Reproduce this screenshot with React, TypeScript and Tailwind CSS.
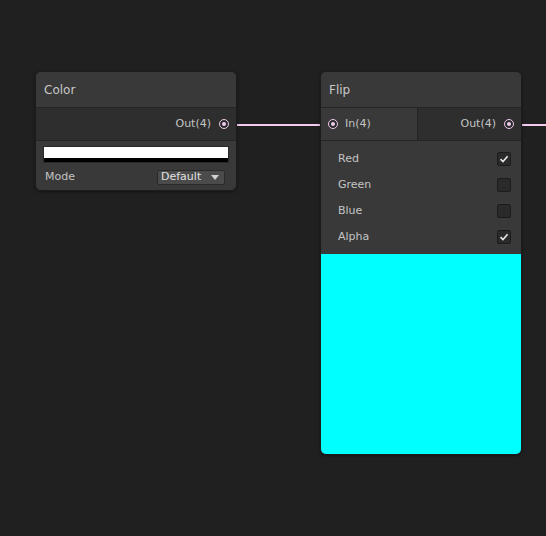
import React from 'react';

const font = { fontFamily: '"DejaVu Sans", Verdana, sans-serif' };

function Port() {
  return (
    <span className="flex h-[10px] w-[10px] items-center justify-center rounded-full border-[1.5px] border-[#f2cbef] bg-[#2a2a2a]">
      <span className="h-[4px] w-[4px] rounded-full bg-[#f2cbef]" />
    </span>
  );
}

function CheckBox({ checked }: { checked: boolean }) {
  return (
    <span className="flex h-[14px] w-[14px] items-center justify-center rounded-[2px] border border-[#1c1c1c] bg-[#2a2a2a]">
      {checked && (
        <svg width="10" height="10" viewBox="0 0 10 10">
          <path d="M1.5 5.2 L4 7.6 L8.6 2.2" fill="none" stroke="#e6e6e6" strokeWidth="1.6" />
        </svg>
      )}
    </span>
  );
}

function Title({ children }: { children: React.ReactNode }) {
  return (
    <div className="flex h-[36px] items-center border-b border-[#242424] bg-[#393939] px-[8px] text-[12px] text-[#c8c8c8]">
      {children}
    </div>
  );
}

const toggles = [
  { label: 'Red', on: true },
  { label: 'Green', on: false },
  { label: 'Blue', on: false },
  { label: 'Alpha', on: true },
];

export default function App() {
  return (
    <div className="relative h-[536px] w-[546px] overflow-hidden bg-[#202020]" style={font}>
      <svg className="absolute left-0 top-0" width="546" height="536">
        <line x1="228" y1="125" x2="236" y2="125" stroke="#7a6a78" strokeWidth="2" />
        <line x1="236" y1="125" x2="321" y2="125" stroke="#f2cbef" strokeWidth="2" />
        <line x1="321" y1="125" x2="329" y2="125" stroke="#7a6a78" strokeWidth="2" />
        <line x1="513" y1="125" x2="521" y2="125" stroke="#7a6a78" strokeWidth="2" />
        <line x1="521" y1="125" x2="546" y2="125" stroke="#f2cbef" strokeWidth="2" />
      </svg>

      {/* Color node */}
      <div className="absolute left-[35px] top-[71px] w-[202px] overflow-hidden rounded-[6px] border border-[#1c1c1c] bg-[#393939] shadow-[0_1px_3px_rgba(0,0,0,0.4)]">
        <Title>Color</Title>
        <div className="flex h-[33px] items-center justify-end gap-[8px] border-b border-[#242424] bg-[#2e2e2e] pr-[7px] text-[11px] text-[#c4c4c4]">
          <span>Out(4)</span>
          <Port />
        </div>
        <div className="px-[7px] pb-[4px] pt-[5px]">
          <div className="h-[17px] border border-[#2a2a2a]">
            <div className="h-[11px] bg-white" />
            <div className="h-[4px] bg-black" />
          </div>
          <div className="mt-[6px] flex h-[17px] items-center justify-between pl-[2px] text-[11px] text-[#c4c4c4]">
            <span>Mode</span>
            <div className="mr-[4px] flex h-[15px] w-[68px] items-center justify-between rounded-[2px] border border-[#2a2a2a] bg-[#4b4b4b] pl-[3px] pr-[5px] text-[#e0e0e0]">
              <span>Default</span>
              <svg width="8" height="5" viewBox="0 0 8 5">
                <path d="M0 0 L8 0 L4 5 Z" fill="#d0d0d0" />
              </svg>
            </div>
          </div>
        </div>
      </div>

      {/* Flip node */}
      <div className="absolute left-[320px] top-[71px] w-[202px] overflow-hidden rounded-[6px] border border-[#1c1c1c] bg-[#393939] shadow-[0_1px_3px_rgba(0,0,0,0.4)]">
        <Title>Flip</Title>
        <div className="flex h-[33px] border-b border-[#242424] text-[11px] text-[#c4c4c4]">
          <div className="flex w-[97px] items-center gap-[7px] border-r border-[#242424] bg-[#393939] pl-[7px]">
            <Port />
            <span>In(4)</span>
          </div>
          <div className="flex flex-1 items-center justify-end gap-[8px] bg-[#2e2e2e] pr-[7px]">
            <span>Out(4)</span>
            <Port />
          </div>
        </div>
        <div className="pb-[4px] pt-[5px]">
          {toggles.map((t) => (
            <div key={t.label} className="flex h-[26px] items-center justify-between pl-[17px] pr-[10px] text-[11px] text-[#c4c4c4]">
              <span>{t.label}</span>
              <CheckBox checked={t.on} />
            </div>
          ))}
        </div>
        <div className="h-[200px] bg-[#00ffff]" />
      </div>
    </div>
  );
}
